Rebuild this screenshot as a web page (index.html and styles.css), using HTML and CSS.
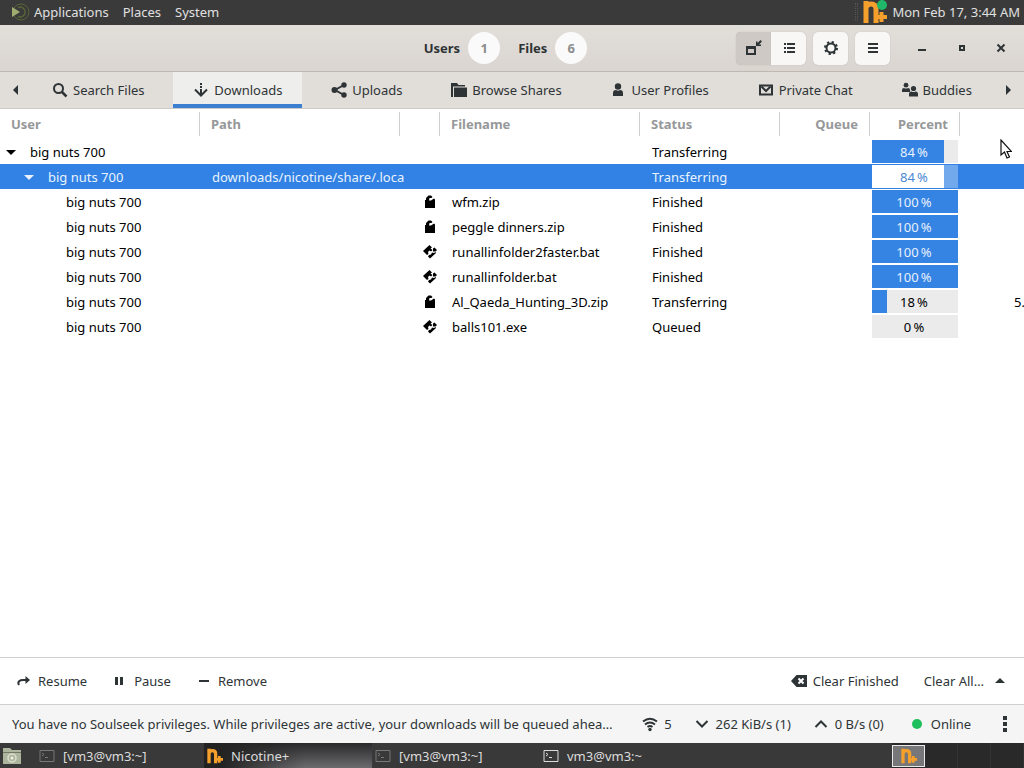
FILE: index.html
```html
<!DOCTYPE html>
<html lang="en">
<head>
<meta charset="utf-8">
<meta name="viewport" content="width=device-width, initial-scale=1">
<title>Nicotine+</title>
<link rel="stylesheet" href="styles.css">
</head>
<body>
<svg class="sprite" aria-hidden="true">
  <symbol id="archive" viewBox="0 0 16 16"><path d="M3 6h1V4l2.500-2.500H9L10.500 3 9.500 4H7.500L7 6.500h2L12 4.500l1 1V14H3z"/></symbol>
  <symbol id="program" viewBox="0 0 16 16"><path d="M1 7L7.500 1 10 3.500 8.500 4.500l2 1.500L9 7.500 7.500 6.500 6 8l.500 2L5 11z"/><path d="M11 4.500l1.500-1L15 6l-1.500 1.500H11zM7 11l2-.500 1-2 2 .500 1.500-1L14 9l-6 5.500L6 12.500z"/></symbol>
  <symbol id="terminal" viewBox="0 0 16 16"><path d="M1 2.500h14v11H1z" fill="none" stroke="currentColor"/><path d="M3 5l2 1.500L3 8M6 9.500h3" fill="none" stroke="currentColor"/></symbol>
  <symbol id="nicotine" viewBox="0 0 24 24"><path d="M3 23V6M3 9q0-5 5-5t5 5v14" fill="none" stroke="#f5a02c" stroke-width="5"/><path d="M.500 1h5v5h-5z" fill="#f5a02c"/><path d="M18.500 12v10M14 17h10" fill="none" stroke="#f5a02c" stroke-width="4"/></symbol>
</svg>

<header class="panel">
  <nav class="panel-menu">
    <svg class="logo" viewBox="0 0 20 20"><circle cx="11" cy="10" r="8" fill="none" stroke="#596437"/><path d="M8 5.500a5 5 0 1 1 0 9" fill="none" stroke="#596437" stroke-width="1.500"/><path d="M2 5l8 5-8 5z" fill="#a0ad70"/></svg>
    <button type="button">Applications</button>
    <button type="button">Places</button>
    <button type="button">System</button>
  </nav>
  <div class="tray">
    <span class="grip"></span>
    <span class="tray-icon"><svg viewBox="0 0 24 24"><use href="#nicotine"/></svg><i class="tray-dot"></i></span>
    <time>Mon Feb 17, 3:44 AM</time>
  </div>
</header>

<div class="headerbar">
  <div class="counts">
    <span class="count">Users <span class="badge">1</span></span>
    <span class="count">Files <span class="badge">6</span></span>
  </div>
  <div class="controls">
    <div class="linked">
      <button class="tool pressed" type="button" aria-label="Collapse"><svg viewBox="0 0 16 16"><path d="M1 8h8v6H1z" fill="none" stroke="currentColor" stroke-width="2"/><path d="M0 6h10v3H0zM10 1.500h1.500V3L14.500 0 16 1.500l-3 3h2V6h-5z"/></svg></button>
      <button class="tool" type="button" aria-label="List"><svg viewBox="0 0 16 16"><path d="M3 3h2v2H3zM3 7h2v2H3zM3 11h2v2H3zM6 3h8v2H6zM6 7h8v2H6zM6 11h8v2H6z"/></svg></button>
    </div>
    <button class="tool" type="button" aria-label="Preferences"><svg viewBox="0 0 16 16"><g fill="none" stroke="currentColor"><circle cx="8" cy="8" r="4.500" stroke-width="2"/><circle cx="8" cy="8" r="6" stroke-width="2" stroke-dasharray="2.200 2.510"/></g></svg></button>
    <button class="tool" type="button" aria-label="Menu"><svg viewBox="0 0 16 16"><path d="M3 3h10v2H3zM3 7h10v2H3zM3 11h10v2H3z"/></svg></button>
    <div class="window-buttons">
      <button type="button" aria-label="Minimize"><svg viewBox="0 0 16 16"><path d="M4 9h8v2H4z"/></svg></button>
      <button type="button" aria-label="Maximize"><svg viewBox="0 0 16 16"><path d="M6 6h4v4H6z" fill="none" stroke="currentColor" stroke-width="2"/></svg></button>
      <button type="button" aria-label="Close"><svg viewBox="0 0 16 16"><path d="M4.500 4.500l7 7M11.500 4.500l-7 7" stroke="currentColor" stroke-width="2"/></svg></button>
    </div>
  </div>
</div>

<div class="tabbar">
  <button class="scroll" type="button" aria-label="Previous tab"><svg viewBox="0 0 16 16"><path d="M10 3v10L5 8z"/></svg></button>
  <nav class="tabs" role="tablist">
    <button class="tab" role="tab" type="button"><svg viewBox="0 0 16 16"><circle cx="6.500" cy="6.500" r="4.500" fill="none" stroke="currentColor" stroke-width="2"/><path d="M9.500 9.500L14.500 14.500" stroke="currentColor" stroke-width="2.500"/></svg>Search Files</button>
    <button class="tab active" role="tab" aria-selected="true" type="button"><svg viewBox="0 0 16 16"><path d="M8 1v2M8 4v2M8 7v6M2 7.500l6 6 6-6" fill="none" stroke="currentColor" stroke-width="2"/></svg>Downloads</button>
    <button class="tab" role="tab" type="button"><svg viewBox="0 0 16 16"><path d="M13 3L4 8l9 5" fill="none" stroke="currentColor" stroke-width="2"/><circle cx="3.500" cy="8" r="3"/><circle cx="13" cy="3" r="2.700"/><circle cx="13" cy="13" r="2.700"/></svg>Uploads</button>
    <button class="tab" role="tab" type="button"><svg viewBox="0 0 16 16"><path d="M0 1h6l1.500 2H14v1.500H2V15H0z"/><path d="M3 5.500h13V15H3z"/></svg>Browse Shares</button>
    <button class="tab" role="tab" type="button"><svg viewBox="0 0 16 16"><circle cx="8" cy="4.500" r="3.200"/><path d="M3 14v-3q0-3 3-3 2 1.500 4 0 3 0 3 3v3z"/></svg>User Profiles</button>
    <button class="tab" role="tab" type="button"><svg viewBox="0 0 16 16"><path d="M2 3.500h12v9H2z" fill="none" stroke="currentColor" stroke-width="2"/><path d="M3.500 4.500L8 9l4.500-4.500" fill="none" stroke="currentColor" stroke-width="2"/></svg>Private Chat</button>
    <button class="tab" role="tab" type="button"><svg viewBox="0 0 16 16"><circle cx="4" cy="3.200" r="2.400"/><path d="M0 10V8q0-2 2-2 2 1 4 0 2 0 2 2v2z"/><circle cx="11.500" cy="6.500" r="2.600"/><path d="M7 14.500V12q0-2.500 2.500-2.500 2 1 4 0Q16 9.500 16 12v2.500z"/></svg>Buddies</button>
  </nav>
  <button class="scroll" type="button" aria-label="Next tab"><svg viewBox="0 0 16 16"><path d="M6 3v10l5-5z"/></svg></button>
</div>

<main class="list">
  <table>
    <colgroup><col class="c-user"><col class="c-path"><col class="c-icon"><col class="c-file"><col class="c-status"><col class="c-queue"><col class="c-percent"><col></colgroup>
    <thead>
      <tr><th>User</th><th>Path</th><th></th><th>Filename</th><th>Status</th><th class="end">Queue</th><th class="end">Percent</th><th></th></tr>
    </thead>
    <tbody>
      <tr><td class="level-1"><svg class="expander" viewBox="0 0 10 6"><path d="M0 0h10L5 5z"/></svg>big nuts 700</td><td></td><td></td><td></td><td>Transferring</td><td></td><td class="percent"><div class="bar light" style="--p:84%">84&#8201;%</div></td><td></td></tr>
      <tr class="selected"><td class="level-2"><svg class="expander" viewBox="0 0 10 6"><path d="M0 0h10L5 5z"/></svg>big nuts 700</td><td>downloads/nicotine/share/.loca</td><td></td><td></td><td>Transferring</td><td></td><td class="percent"><div class="bar" style="--p:84%">84&#8201;%</div></td><td></td></tr>
      <tr><td class="level-3">big nuts 700</td><td></td><td class="type"><svg viewBox="0 0 16 16"><use href="#archive"/></svg></td><td>wfm.zip</td><td>Finished</td><td></td><td class="percent"><div class="bar light" style="--p:100%">100&#8201;%</div></td><td></td></tr>
      <tr><td class="level-3">big nuts 700</td><td></td><td class="type"><svg viewBox="0 0 16 16"><use href="#archive"/></svg></td><td>peggle dinners.zip</td><td>Finished</td><td></td><td class="percent"><div class="bar light" style="--p:100%">100&#8201;%</div></td><td></td></tr>
      <tr><td class="level-3">big nuts 700</td><td></td><td class="type"><svg viewBox="0 0 16 16"><use href="#program"/></svg></td><td>runallinfolder2faster.bat</td><td>Finished</td><td></td><td class="percent"><div class="bar light" style="--p:100%">100&#8201;%</div></td><td></td></tr>
      <tr><td class="level-3">big nuts 700</td><td></td><td class="type"><svg viewBox="0 0 16 16"><use href="#program"/></svg></td><td>runallinfolder.bat</td><td>Finished</td><td></td><td class="percent"><div class="bar light" style="--p:100%">100&#8201;%</div></td><td></td></tr>
      <tr><td class="level-3">big nuts 700</td><td></td><td class="type"><svg viewBox="0 0 16 16"><use href="#archive"/></svg></td><td>Al_Qaeda_Hunting_3D.zip</td><td>Transferring</td><td></td><td class="percent"><div class="bar" style="--p:18%">18&#8201;%</div></td><td class="size">5.</td></tr>
      <tr><td class="level-3">big nuts 700</td><td></td><td class="type"><svg viewBox="0 0 16 16"><use href="#program"/></svg></td><td>balls101.exe</td><td>Queued</td><td></td><td class="percent"><div class="bar" style="--p:0%">0&#8201;%</div></td><td></td></tr>
    </tbody>
  </table>
  <svg class="pointer" viewBox="0 0 12 20"><path d="M1 1v15l3.500-3 2.500 6 2.500-1L7 12.500h4.500z" fill="#fff" stroke="#111" stroke-width="1.200"/></svg>
</main>

<div class="actions">
  <button type="button"><svg viewBox="0 0 16 16"><path d="M3 12C1 8.500 4 7 7 7h4" fill="none" stroke="currentColor" stroke-width="2"/><path d="M9.500 3L14 7l-4.500 4z"/></svg>Resume</button>
  <button type="button"><svg viewBox="0 0 16 16"><path d="M3 4h3v8H3zM8 4h3v8H8z"/></svg>Pause</button>
  <button type="button"><svg viewBox="0 0 16 16"><path d="M3 7h10v2H3z"/></svg>Remove</button>
  <span class="spacer"></span>
  <button type="button"><svg viewBox="0 0 16 16"><path d="M5.500 2H16v12H5.500L0 8z"/><path d="M7.500 5.500l5 5M12.500 5.500l-5 5" stroke="#fff" stroke-width="2"/></svg>Clear Finished</button>
  <button class="menu" type="button">Clear All…<svg viewBox="0 0 16 16"><path d="M3 10h10L8 5z"/></svg></button>
</div>

<footer class="status">
  <span class="message">You have no Soulseek privileges. While privileges are active, your downloads will be queued ahea…</span>
  <button type="button"><svg viewBox="0 0 16 16"><path d="M1 5.500q7-5.500 14 0M3 8.500q5-4 10 0M5.500 11q2.500-2 5 0" fill="none" stroke="currentColor" stroke-width="2"/><circle cx="8" cy="13.500" r="1.700"/></svg>5</button>
  <button type="button"><svg viewBox="0 0 16 16"><path d="M2.500 5L8 10.500 13.500 5" fill="none" stroke="currentColor" stroke-width="2"/></svg>262 KiB/s (1)</button>
  <button type="button"><svg viewBox="0 0 16 16"><path d="M2.500 11L8 5.500l5.500 5.500" fill="none" stroke="currentColor" stroke-width="2"/></svg>0 B/s (0)</button>
  <button class="online" type="button"><i class="dot"></i>Online</button>
  <button class="more" type="button" aria-label="More"><svg viewBox="0 0 16 16"><path d="M6 0h4v4H6zM6 6h4v4H6zM6 12h4v4H6z"/></svg></button>
</footer>

<div class="taskbar">
  <button class="desktop" type="button" aria-label="File manager"><svg viewBox="0 0 20 18"><path d="M1 1h7l2 2h9v14H1z" fill="#aeb59f"/><path d="M1 5h18v1H1z" fill="#737968"/><circle cx="10" cy="11" r="4" fill="none" stroke="#dbe0cc" stroke-width="1.500"/><circle cx="10" cy="11" r="1.500" fill="#eef0e4"/></svg></button>
  <div class="tasks">
    <button class="task dim" type="button"><svg viewBox="0 0 16 16"><use href="#terminal"/></svg>[vm3@vm3:~]</button>
    <button class="task current" type="button"><svg viewBox="0 0 24 24"><use href="#nicotine"/></svg>Nicotine+</button>
    <button class="task dim" type="button"><svg viewBox="0 0 16 16"><use href="#terminal"/></svg>[vm3@vm3:~]</button>
    <button class="task" type="button"><svg viewBox="0 0 16 16"><use href="#terminal"/></svg>vm3@vm3:~</button>
  </div>
  <div class="workspaces">
    <button class="current" type="button" aria-label="Workspace 1"><svg viewBox="0 0 24 24"><use href="#nicotine"/></svg></button>
    <button type="button" aria-label="Workspace 2"></button>
    <button type="button" aria-label="Workspace 3"></button>
    <button type="button" aria-label="Workspace 4"></button>
  </div>
</div>
</body>
</html>
```
FILE: styles.css
```css
* { box-sizing: border-box; }

body {
  margin: 0;
  min-height: 100vh;
  display: flex;
  flex-direction: column;
  font: 13px/18px "Noto Sans", "Open Sans", sans-serif;
  color: #2e3436;
  background: #fff;
  overflow-x: hidden;
}

button {
  display: flex;
  align-items: center;
  margin: 0;
  padding: 0;
  border: 0;
  background: none;
  font: inherit;
  color: inherit;
  white-space: nowrap;
}

svg { display: block; flex: none; width: 16px; height: 16px; fill: currentColor; }
.sprite { position: absolute; width: 0; height: 0; }

/* Desktop panel */
.panel {
  display: flex;
  justify-content: space-between;
  height: 25px;
  padding: 0 4px 0 10px;
  background: #3a3a3a;
  color: #e0e0e0;
}
.panel-menu, .tray { display: flex; align-items: center; height: 24px; }
.panel-menu { gap: 14px; }
.panel-menu .logo { width: 20px; height: 20px; margin-right: -10px; }
.tray { gap: 5px; }
.grip { width: 3px; height: 18px; border: dotted #555; border-width: 0 1px; }
.tray-icon { position: relative; }
.tray-icon svg { width: 24px; height: 24px; }
.tray-dot { position: absolute; top: 0; right: 0; width: 10px; height: 10px; border-radius: 50%; background: #20b868; }

/* Window header */
.headerbar {
  display: grid;
  grid-template-columns: 1fr auto 1fr;
  align-items: center;
  height: 47px;
  padding-right: 4px;
  background: linear-gradient(#e2deda, #dad5d0);
  border-bottom: 1px solid #bfb8b1;
}
.counts { grid-column: 2; display: flex; gap: 18px; padding-right: 9px; font-weight: bold; }
.count { display: flex; align-items: center; gap: 8px; }
.badge {
  width: 32px;
  border-radius: 50%;
  background: #fbfafa;
  color: #8b8e8f;
  line-height: 32px;
  text-align: center;
}
.controls { display: flex; justify-content: flex-end; gap: 7px; }
.linked { display: flex; }
.tool {
  justify-content: center;
  width: 35px;
  height: 33px;
  border-radius: 5px;
  background: #f8f7f6;
  box-shadow: 0 0 1px #aaa39c;
}
.linked .tool { border-radius: 0 5px 5px 0; }
.linked .pressed { border-radius: 5px 0 0 5px; background: #cec9c4; }
.window-buttons { display: flex; margin-left: 5px; }
.window-buttons button { justify-content: center; width: 40px; height: 33px; }
.window-buttons button:last-child { width: 38px; }

/* Tabs */
.tabbar { display: flex; height: 37px; background: #e1ddd9; border-bottom: 1px solid #d0cbc6; }
.scroll { justify-content: center; width: 32px; }
.tabs { flex: 1; display: flex; justify-content: space-between; }
.tab { gap: 5px; padding: 0 20px; }
.tab.active { background: #eeeeec; box-shadow: inset 0 -4px #3a7fd0; }

/* Transfer list */
.list { position: relative; flex: 1; overflow: hidden; }
table { width: 100%; table-layout: fixed; border-collapse: collapse; color: #000; }
.c-user, .c-path, .c-file { width: 200px; }
.c-icon { width: 40px; }
.c-status { width: 140px; }
.c-queue, .c-percent { width: 90px; }
th {
  height: 30px;
  padding: 0 11px;
  text-align: left;
  color: #969899;
  background: linear-gradient(#cfcfcf, #cfcfcf) right 3px / 1px 24px no-repeat;
}
th:last-child { background: none; }
th.end { padding-right: 12px; text-align: right; }
td { height: 25px; padding: 0 0 0 12px; white-space: nowrap; }
.level-1 { padding-left: 6px; }
.level-2 { padding-left: 24px; }
.level-3 { padding-left: 66px; }
.expander { display: inline-block; width: 10px; height: 6px; margin-right: 14px; vertical-align: middle; }
.type { padding-left: 22px; }
.percent { padding: 1px 2px; }
.size { padding-left: 54px; }
.bar {
  --fill: #3584e4;
  --rest: #ebebeb;
  height: 23px;
  line-height: 24px;
  padding-right: 2px;
  text-align: center;
  background: linear-gradient(90deg, var(--fill) var(--p), var(--rest) var(--p));
}
.bar.light { color: #e8f1fc; }
.selected { background: #3182e4; color: #eaf3fd; }
.selected .bar { --fill: #fff; --rest: #72a8ec; color: #4b87d3; }
.pointer { position: absolute; left: 1000px; top: 30px; width: 12px; height: 20px; }

/* Action bar */
.actions {
  display: flex;
  align-items: center;
  gap: 25px;
  height: 47px;
  padding: 0 16px;
  border-top: 1px solid #cfcfcf;
}
.actions button { gap: 6px; }
.actions .menu { gap: 8px; }
.spacer { flex: 1; }

/* Status bar */
.status {
  display: flex;
  align-items: center;
  height: 39px;
  padding: 0 11px 0 12px;
  background: #f5f5f5;
  border-top: 1px solid #cfcfcf;
}
.message { flex: 1; white-space: nowrap; }
.status button { gap: 6px; margin-left: 22px; }
.status .online { margin-left: 28px; }
.status .more { margin-left: 26px; }
.dot { width: 10px; height: 10px; margin-right: 3px; border-radius: 50%; background: #1fbf5b; }

/* Taskbar */
.taskbar { display: flex; height: 25px; background: #393939; color: #dcdcdc; }
.desktop { width: 36px; padding-left: 2px; }
.desktop svg { width: 20px; height: 18px; }
.tasks { flex: 1; display: flex; min-width: 0; }
.task { flex: 0 1 168px; gap: 8px; padding-left: 3px; }
.task.dim svg { color: #777; }
.task.current { background: linear-gradient(90deg, #222 10%, transparent 60%), linear-gradient(#29292b, #6b6b6e); }
.task.current svg { width: 16px; height: 16px; }
.workspaces { display: flex; background: #292929; }
.workspaces button { justify-content: center; width: 33px; border-right: 1px solid #333; }
.workspaces .current { margin: 2px 0 1px; border: 1px solid #e8e8e8; background: #77777a; }
```
